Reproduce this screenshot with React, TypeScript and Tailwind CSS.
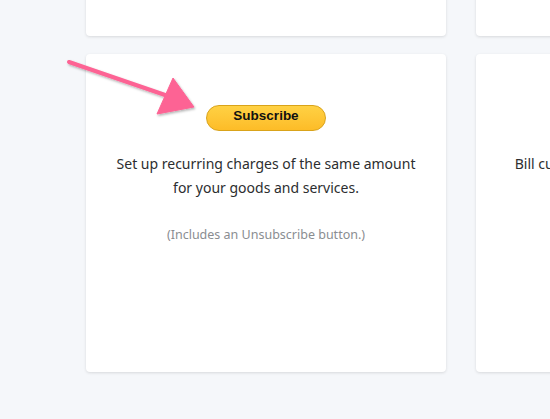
import React from "react";

function Card({ children }: { children?: React.ReactNode }) {
  return (
    <div className="w-[360px] shrink-0 rounded-[4px] bg-white shadow-[0_1px_3px_rgba(0,0,0,0.12)]">
      {children}
    </div>
  );
}

export default function App() {
  return (
    <div className="relative w-[550px] h-[419px] overflow-hidden bg-[#f5f7fa]" style={{ fontFamily: '"Noto Sans", "Open Sans", sans-serif' }}>
      <div className="flex flex-col gap-[18px] pl-[86px] -mt-[100px]">
        <div className="flex gap-[30px]">
          <Card>
            <div className="h-[136px]" />
          </Card>
          <Card>
            <div className="h-[136px]" />
          </Card>
        </div>
        <div className="flex gap-[30px]">
          <Card>
            <div className="h-[318px] flex flex-col items-center pt-[51px]">
              <button
                className="w-[120px] h-[26px] pb-[4px] rounded-full border border-[#d9a31a] bg-gradient-to-b from-[#ffd143] to-[#fdbc27] text-[13.5px] font-bold text-[#111] leading-none"
                style={{ fontFamily: '"Liberation Sans", Arial, sans-serif' }}
              >
                Subscribe
              </button>
              <p className="mt-[21px] text-center text-[14px] leading-[24px] text-[#2c2e2f]">
                Set up recurring charges of the same amount
                <br />
                for your goods and services.
              </p>
              <p className="mt-[26px] text-center text-[12.5px] leading-[18px] text-[#8a8d91]">
                (Includes an Unsubscribe button.)
              </p>
            </div>
          </Card>
          <Card>
            <div className="h-[318px] flex flex-col items-center pt-[51px]">
              <div className="h-[26px]" />
              <p className="mt-[21px] text-center text-[14px] leading-[24px] text-[#2c2e2f]">
                Bill customers recurring charges of varying
                <br />
                amounts for your goods.
              </p>
            </div>
          </Card>
        </div>
      </div>
      <svg className="absolute left-0 top-0 pointer-events-none" width="550" height="419" viewBox="0 0 550 419">
        <defs>
          <filter id="sh" x="-20%" y="-20%" width="140%" height="140%">
            <feDropShadow dx="1" dy="1.5" stdDeviation="1" floodColor="#000" floodOpacity="0.3" />
          </filter>
        </defs>
        <g filter="url(#sh)" fill="#fd6494" stroke="#fd6494">
          <line x1="69" y1="62" x2="168" y2="96" strokeWidth="4" strokeLinecap="round" />
          <polygon points="173,78 157,114 194,107" strokeWidth="1" strokeLinejoin="round" />
        </g>
      </svg>
    </div>
  );
}
